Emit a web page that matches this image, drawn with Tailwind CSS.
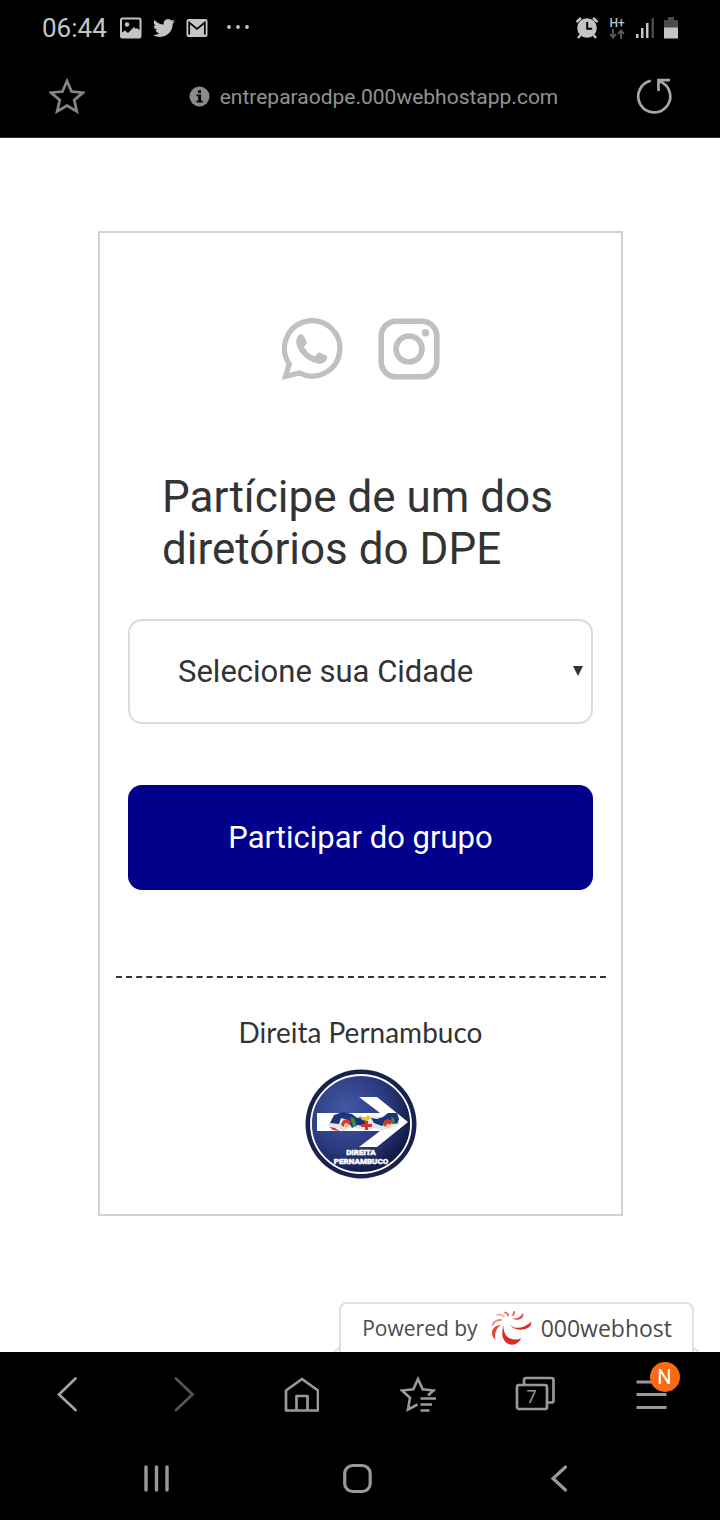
<!DOCTYPE html>
<html lang="pt-BR">
<head>
<meta charset="utf-8">
<meta name="viewport" content="width=device-width, initial-scale=1">
<title>Direita Pernambuco</title>
<script src="https://cdn.jsdelivr.net/npm/@tailwindcss/browser@4"></script>
</head>
<body class="flex min-h-screen flex-col bg-white font-['Roboto',sans-serif] text-[#333]">

<header class="border-b border-[#332f2f] bg-black">
  <!-- Status bar -->
  <div class="flex h-14 items-center justify-between pr-[41px] pl-[42px] text-[#c4c4c4]">
    <div class="flex items-center">
      <span class="w-[78px] text-[26px] leading-8">06:44</span>
      <div class="flex items-center gap-[11px]">
        <svg class="h-[22px] w-[22px]" viewBox="0 0 22 22" fill="none" stroke="currentColor" stroke-width="2"><rect x="1" y="1.500" width="19.500" height="19" rx="1.500"/><circle cx="7" cy="7.500" r="2.200" fill="currentColor" stroke="none"/><path d="M2 15.500l3-2 3 2.500 6-6 2 2 1-1 3.500 3v6.500H2z" fill="currentColor" stroke="none"/></svg>
        <svg class="h-[22px] w-[22px]" viewBox="0 0 24 24" fill="currentColor"><path d="M23.953 4.570a10 10 0 0 1-2.825.775 4.958 4.958 0 0 0 2.163-2.723 9.990 9.990 0 0 1-3.127 1.184 4.920 4.920 0 0 0-8.384 4.482C7.690 8.095 4.067 6.130 1.640 3.162a4.822 4.822 0 0 0-.666 2.475c0 1.710.87 3.213 2.188 4.096a4.904 4.904 0 0 1-2.228-.616v.06a4.923 4.923 0 0 0 3.946 4.827 4.996 4.996 0 0 1-2.212.085 4.936 4.936 0 0 0 4.604 3.417 9.867 9.867 0 0 1-6.102 2.105c-.39 0-.779-.023-1.170-.067a13.995 13.995 0 0 0 7.557 2.209c9.053 0 13.998-7.496 13.998-13.985 0-.21 0-.42-.015-.63a9.935 9.935 0 0 0 2.460-2.548z"/></svg>
        <svg class="h-[22px] w-[22px]" viewBox="0 0 22 22"><rect x="0.500" y="2" width="21" height="18" rx="2" fill="currentColor"/><path d="M3.200 17.500V5.500L11 12l7.800-6.500v12" fill="none" stroke="#000" stroke-width="1.700"/></svg>
      </div>
      <svg class="ml-[17px] h-[22px] w-6" viewBox="0 0 24 22" fill="currentColor"><circle cx="4" cy="10" r="1.900"/><circle cx="13" cy="10" r="1.900"/><circle cx="22" cy="10" r="1.900"/></svg>
    </div>
    <div class="flex items-center gap-2">
      <svg class="h-6 w-6" viewBox="0 0 24 24"><g fill="none" stroke="currentColor" stroke-width="2.400"><path d="M1.500 6L6 2M22.500 6L18 2M5.500 19L3 22M18.500 19l2.500 3"/></g><circle cx="12" cy="12" r="9.800" fill="currentColor"/><path d="M12.200 6v6.800h5" fill="none" stroke="#000" stroke-width="1.900"/></svg>
      <div class="flex w-5 flex-col items-center">
        <span class="text-[12px] leading-3 font-medium">H+</span>
        <svg class="h-[10px] w-4" viewBox="0 0 16 10" fill="none" stroke="#5c5c5c" stroke-width="1.800"><path d="M4 0v8M1 5l3 3.500L7 5M12 10V2M9 5l3-3.500L15 5"/></svg>
      </div>
      <svg class="h-[22px] w-5" viewBox="0 0 20 22" fill="currentColor"><rect x="1" y="17" width="2.500" height="4"/><rect x="6" y="11" width="2.500" height="10"/><rect x="11" y="6" width="2.500" height="15"/><rect x="16.500" y="1" width="2.500" height="20" fill="#4a4a4a"/></svg>
      <svg class="h-[22px] w-4" viewBox="0 0 16 22"><path d="M5 0h6v3h4v8H1V3h4z" fill="#4a4a4a"/><rect x="1" y="10.500" width="14" height="11" fill="currentColor"/></svg>
    </div>
  </div>
  <!-- Address bar -->
  <div class="flex h-[81px] items-center justify-between pr-12 pb-[2px] pl-[49px] text-[#929292]">
    <button type="button" aria-label="Favoritar">
      <svg class="block h-9 w-9" viewBox="0 0 36 36" fill="none" stroke="#858585" stroke-width="2.700"><path d="M18 3l4.500 10.600L34 14.600l-8.800 7.500 2.700 11.300L18 27.500l-9.900 5.900 2.700-11.300L2 14.600l11.500-1z"/></svg>
    </button>
    <a href="#" class="flex items-center gap-[10px] pt-[2px] pl-[26px]">
      <svg class="h-[21px] w-[21px]" viewBox="0 0 21 21"><circle cx="10.500" cy="10.500" r="10" fill="#8a8a8a"/><path d="M7.500 8.500h4.600v6.300h1.700v1.700H7.500v-1.700h1.700v-4.600H7.500zM9 4.200h3v2.700H9z" fill="#000"/></svg>
      <span class="text-[21px] leading-7">entreparaodpe.000webhostapp.com</span>
    </a>
    <button type="button" aria-label="Recarregar">
      <svg class="block h-9 w-9" viewBox="0 0 36 36" fill="none" stroke="#a6a6a6" stroke-width="2.700"><path d="M14.800 2.800A16 16 0 1 0 24 3.500M22.500 13V2.200H34"/></svg>
    </button>
  </div>
</header>

<main class="flex flex-1 flex-col">
  <section class="mt-[93px] mr-[97px] ml-[98px] border-2 border-[#d2d2d2] pt-[85px] pb-[35px]">
    <div class="flex justify-center gap-[34px] text-[#c0c0c0]">
      <a href="#" aria-label="WhatsApp"><svg class="block h-[62px] w-[62px]" viewBox="0 0 62 62"><path d="M3.500 58.300L7.300 46A27.700 27.700 0 1 1 17.500 55z" fill="none" stroke="currentColor" stroke-width="5.200"/><path d="M17 17c1.500-1.200 4-.9 4.900.9l2.500 5.400c.6 1.300.3 2.400-.6 3.400l-1.900 2c2.600 4.600 6.100 7.900 10.800 9.800l2.700-3.100c.8-.9 1.800-1.100 2.900-.6l5.700 2.700c1.300.7 1.400 1.800.9 3.200-1.500 4-5.300 5.600-9.300 4.800-10.100-2.300-17.500-9.100-20.600-17.500-1.400-4-.8-8.600 2-11z" fill="currentColor"/></svg></a>
      <a href="#" aria-label="Instagram"><svg class="block h-[62px] w-[62px]" viewBox="0 0 62 62" fill="none" stroke="currentColor" stroke-width="5.600"><rect x="3.200" y="3.200" width="55.600" height="55.600" rx="15"/><circle cx="31" cy="31" r="13"/><circle cx="47.500" cy="14.800" r="3.700" fill="currentColor" stroke="none"/></svg></a>
    </div>
    <h1 class="mr-10 ml-[62px] mt-[91px] text-[44px] leading-[52px]">Partícipe de um dos<br>diretórios do DPE</h1>
    <form class="mx-7 mt-11" onsubmit="return false">
      <div class="relative">
        <select aria-label="Cidade" class="block h-[105px] w-full appearance-none rounded-[14px] border-2 border-[#dcdce0] bg-white pt-[2px] pr-10 pl-12 text-[31px] text-[#333]">
          <option>Selecione sua Cidade</option>
        </select>
        <svg class="pointer-events-none absolute top-[47px] right-[10px] h-[10px] w-[10px]" viewBox="0 0 10 10"><path d="M0 0h10L5 10z" fill="#333"/></svg>
      </div>
      <button type="submit" class="mt-[61px] block h-[105px] w-full rounded-[14px] bg-[#00008b] pt-[2px] text-[31px] text-white">Participar do grupo</button>
    </form>
    <hr class="mr-[15px] ml-4 mt-[86px] border-t-2 border-dashed border-[#333]">
    <p class="mt-9 text-center font-['Lato',sans-serif] text-[28px] leading-9">Direita Pernambuco</p>
    <svg class="mx-auto mt-[19px] block h-[110px] w-[112px]" viewBox="0 0 112 110" role="img" aria-label="Direita Pernambuco">
      <defs>
        <radialGradient id="disc" cx="0.350" cy="0.350" r="0.750"><stop offset="0" stop-color="#4558a6"/><stop offset="0.550" stop-color="#2b3a80"/><stop offset="1" stop-color="#0b1334"/></radialGradient>
      </defs>
      <ellipse cx="56" cy="55" rx="55.500" ry="54.500" fill="#17224f"/>
      <ellipse cx="56" cy="55" rx="50" ry="49" fill="url(#disc)" stroke="#fff" stroke-width="1.800"/>
      <path d="M12 44h63L54 28h18l31 25-31 25H54l21-16H12z" fill="#fff"/>
      <path d="M23 56l6-9 10-2 9 2 12 2 5-3 6 2 8-1 5-3 9 2 1 9-8 4-9 2-8-2-6 2-9-1-7-2-8 4-7-3-5 1z" fill="#e4e4ea"/>
      <path d="M25 54l4-8 9-3 9 2 5 4 6-1 5 5-3 4-8-1-5 3-4-8-7-2-2 6zM66 49l6 1 6-2 5-4 9 0 2 6-2 5-5-2-5 0-5 4-8-3z" fill="#1d3475"/>
      <path d="M36 56c1-6 6-8 10-3l-2 4c-1-4-5-4-5 1zM78 56c0-6 6-8 10-3l-3 3c-1-2-4-1-4 2z" fill="#d8392f"/>
      <path d="M39 57c0-3 3-3 4 0l-1 2zM81 57c0-2 3-2 3 0l-1 2z" fill="#efc62c"/>
      <path d="M45 48l4 1 3 8-4 1zM86 48l3 1 1 6-3 0z" fill="#3b8b4c"/>
      <path d="M54 46l5 3 4-3 3 3-4 3-5-1z" fill="#efc62c"/>
      <path d="M57 55h3v-3h3v3h4v3h-4v3h-3v-3h-4zM24 58l6 1 5 3-7-1z" fill="#dc3030"/>
      <g fill="#fff" stroke="#fff" stroke-width="0.400" font-family="'Roboto',sans-serif" font-weight="900" font-size="8" text-anchor="middle"><text x="56" y="86">DIREITA</text><text x="56" y="95">PERNAMBUCO</text></g>
    </svg>
  </section>
  <a href="#" class="relative mt-auto mr-[26px] flex h-[50px] items-center self-end rounded-t-lg border-2 border-b-0 border-[#e0e0e0] bg-white pr-5 pl-[21px] font-['Open_Sans',sans-serif] text-[#4b4b4b]">
    <span class="text-[21px] leading-8">Powered by</span>
    <svg class="mr-2 ml-[13px] h-[34px] w-[42px]" viewBox="0 0 42 34" fill="none" stroke-linecap="round">
      <g fill="#dc2b25">
        <path d="M12.500 14c-.5 10 5 14.500 11 14.500 3 0 5-.5 6.500-1.500-1.500 4.500-6 7.500-10.500 6.500-7.500-1.500-10-9.500-7-19.500z"/>
        <path d="M19 14c4 3.500 9 3.500 14 1.500 3-1.500 6-3 7-5 1 4-2 6.500-6 7.500-6 1.500-12 .5-15-4z"/>
        <path d="M10 14c-5 3-6.500 8-5.500 15-3.500-3.500-4.500-7-2.500-11 2-3 5-4 8-4z" fill="#e8453c"/>
        <path d="M21 7.500c5 .5 9-1.500 11-5.500 1 4-1 5.500-4 6.500-3 .5-5.500 0-7-1z" fill="#e8453c"/>
      </g>
      <path d="M10 9C6 9 3 10.500 1.500 14" stroke="#ef8a80" stroke-width="1.800"/>
      <path d="M13 5.500C10.500 3.500 8 3 6 4" stroke="#f2a39b" stroke-width="1.600"/>
      <path d="M17 4.500c0-1.500-1-2.500-3-3M22 4c1-1 1.500-2 1-3" stroke="#e8655c" stroke-width="1.800"/>
    </svg>
    <span class="text-[23px] leading-8 font-medium">000webhost</span>
    <svg class="absolute bottom-0 -left-[7px] h-[7px] w-[7px]" viewBox="0 0 7 7" fill="none" stroke="#e0e0e0" stroke-width="2"><path d="M6 0Q6 5 0 6"/></svg>
    <svg class="absolute -right-[7px] bottom-0 h-[7px] w-[7px]" viewBox="0 0 7 7" fill="none" stroke="#e0e0e0" stroke-width="2"><path d="M1 0Q1 5 7 6"/></svg>
  </a>
</main>

<footer class="bg-black text-[#999]">
  <!-- Browser toolbar -->
  <nav class="grid h-[84px] grid-cols-6 items-center justify-items-center pr-[10px] pl-2" aria-label="Navegador">
    <button type="button" aria-label="Voltar"><svg class="block h-9 w-9" viewBox="0 0 36 36" fill="none" stroke="#a3a3a3" stroke-width="2.700" stroke-linecap="round"><path d="M26.500 2.500L10 18.500l16.500 15.500"/></svg></button>
    <button type="button" aria-label="Avançar"><svg class="block h-9 w-9" viewBox="0 0 36 36" fill="none" stroke="#555" stroke-width="2.700" stroke-linecap="round"><path d="M10 2.500l16.500 16L10 34"/></svg></button>
    <button type="button" aria-label="Início"><svg class="block h-9 w-9" viewBox="0 0 36 36" fill="none" stroke="currentColor" stroke-width="2.700" stroke-linejoin="round"><path d="M3 14.500L19 3l16 11.500V34.500H3zM13.500 34.500V20h11v14.500"/></svg></button>
    <button type="button" aria-label="Favoritos"><svg class="block h-9 w-9" viewBox="0 0 36 36" fill="none" stroke="currentColor" stroke-width="2.600"><path d="M28 19.500l5.500-5-10.800-1.300L18 3l-4.700 10.200L2 14.500l8 7.300L8 33.500l9.500-5"/><path d="M20.500 22.500H36M20.500 28.500H32M20.500 34.500h9"/></svg></button>
    <button type="button" aria-label="Abas" class="grid h-9 w-10 place-items-center">
      <svg class="col-start-1 row-start-1 h-9 w-10" viewBox="0 0 40 36" fill="none" stroke="currentColor" stroke-width="2.700" stroke-linejoin="round"><rect x="2" y="9" width="30" height="24" rx="2"/><path d="M9 8.500V4q0-2 2-2h25.500q2 0 2 2v20.500q0 2-2 2H32.500"/></svg>
      <span class="col-start-1 row-start-1 pt-[6px] pr-[6px] text-[18px] leading-5">7</span>
    </button>
    <button type="button" aria-label="Menu" class="relative">
      <svg class="block h-9 w-9" viewBox="0 0 36 36" fill="none" stroke="currentColor" stroke-width="3"><path d="M2.500 6h30M2.500 18.500h30M2.500 31.500h30"/></svg>
      <span class="absolute -top-[14px] left-4 grid h-[30px] w-[30px] place-items-center rounded-full bg-[#f96b13] text-[20px] leading-6 text-white">N</span>
    </button>
  </nav>
  <!-- System navigation -->
  <nav class="grid h-[84px] grid-cols-3 items-center justify-items-center pr-[60px] pl-14" aria-label="Sistema">
    <button type="button" aria-label="Recentes"><svg class="block h-8 w-8" viewBox="0 0 32 32" fill="none" stroke="currentColor" stroke-width="3.400" stroke-linecap="round"><path d="M5 5v23M15.500 5v23M26 5v23"/></svg></button>
    <button type="button" aria-label="Tela inicial"><svg class="block h-8 w-8" viewBox="0 0 32 32" fill="none" stroke="currentColor" stroke-width="3.200"><rect x="2.700" y="3.500" width="25.500" height="26" rx="8"/></svg></button>
    <button type="button" aria-label="Voltar"><svg class="block h-8 w-8" viewBox="0 0 32 32" fill="none" stroke="currentColor" stroke-width="3.200" stroke-linecap="round"><path d="M22.500 5L10 16.500l12.500 11.500"/></svg></button>
  </nav>
</footer>
</body>
</html>
